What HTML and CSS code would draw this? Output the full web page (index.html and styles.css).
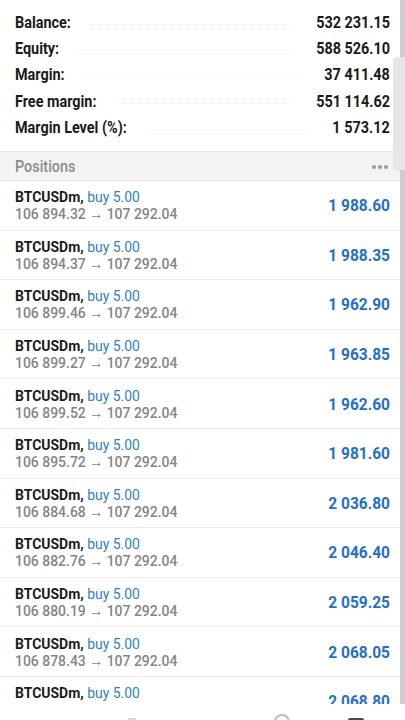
FILE: index.html
```html
<!doctype html>
<html lang="en">
    <head>
        <meta charset="UTF-8" />
        <meta name="viewport" content="width=device-width, initial-scale=1.0" />
        <title>Trade</title>
        <link rel="stylesheet" href="styles.css">
    </head>
    <body>
        <div class="screen">
            <div class="summary">
                <div class="summary-row"><span class="label">Balance:</span><span class="leader"></span><span class="value">532 231.15</span></div>
                <div class="summary-row"><span class="label">Equity:</span><span class="leader"></span><span class="value">588 526.10</span></div>
                <div class="summary-row"><span class="label">Margin:</span><span class="leader"></span><span class="value">37 411.48</span></div>
                <div class="summary-row"><span class="label">Free margin:</span><span class="leader"></span><span class="value">551 114.62</span></div>
                <div class="summary-row"><span class="label">Margin Level (%):</span><span class="leader"></span><span class="value">1 573.12</span></div>
            </div>

            <div class="section-head">
                <span class="label">Positions</span>
                <span class="more"><i></i><i></i><i></i></span>
            </div>

            <div class="positions">
                <div class="position">
                    <div class="info">
                        <div class="title"><b>BTCUSDm,</b> <span class="side">buy 5.00</span></div>
                        <div class="prices">106 894.32 &rarr; 107 292.04</div>
                    </div>
                    <div class="profit">1 988.60</div>
                </div>
                <div class="position">
                    <div class="info">
                        <div class="title"><b>BTCUSDm,</b> <span class="side">buy 5.00</span></div>
                        <div class="prices">106 894.37 &rarr; 107 292.04</div>
                    </div>
                    <div class="profit">1 988.35</div>
                </div>
                <div class="position">
                    <div class="info">
                        <div class="title"><b>BTCUSDm,</b> <span class="side">buy 5.00</span></div>
                        <div class="prices">106 899.46 &rarr; 107 292.04</div>
                    </div>
                    <div class="profit">1 962.90</div>
                </div>
                <div class="position">
                    <div class="info">
                        <div class="title"><b>BTCUSDm,</b> <span class="side">buy 5.00</span></div>
                        <div class="prices">106 899.27 &rarr; 107 292.04</div>
                    </div>
                    <div class="profit">1 963.85</div>
                </div>
                <div class="position">
                    <div class="info">
                        <div class="title"><b>BTCUSDm,</b> <span class="side">buy 5.00</span></div>
                        <div class="prices">106 899.52 &rarr; 107 292.04</div>
                    </div>
                    <div class="profit">1 962.60</div>
                </div>
                <div class="position">
                    <div class="info">
                        <div class="title"><b>BTCUSDm,</b> <span class="side">buy 5.00</span></div>
                        <div class="prices">106 895.72 &rarr; 107 292.04</div>
                    </div>
                    <div class="profit">1 981.60</div>
                </div>
                <div class="position">
                    <div class="info">
                        <div class="title"><b>BTCUSDm,</b> <span class="side">buy 5.00</span></div>
                        <div class="prices">106 884.68 &rarr; 107 292.04</div>
                    </div>
                    <div class="profit">2 036.80</div>
                </div>
                <div class="position">
                    <div class="info">
                        <div class="title"><b>BTCUSDm,</b> <span class="side">buy 5.00</span></div>
                        <div class="prices">106 882.76 &rarr; 107 292.04</div>
                    </div>
                    <div class="profit">2 046.40</div>
                </div>
                <div class="position">
                    <div class="info">
                        <div class="title"><b>BTCUSDm,</b> <span class="side">buy 5.00</span></div>
                        <div class="prices">106 880.19 &rarr; 107 292.04</div>
                    </div>
                    <div class="profit">2 059.25</div>
                </div>
                <div class="position">
                    <div class="info">
                        <div class="title"><b>BTCUSDm,</b> <span class="side">buy 5.00</span></div>
                        <div class="prices">106 878.43 &rarr; 107 292.04</div>
                    </div>
                    <div class="profit">2 068.05</div>
                </div>
                <div class="position">
                    <div class="info">
                        <div class="title"><b>BTCUSDm,</b> <span class="side">buy 5.00</span></div>
                        <div class="prices">106 877.90 &rarr; 107 292.04</div>
                    </div>
                    <div class="profit">2 068.80</div>
                </div>
            </div>

            <!-- scrollbar + faded system bar -->
            <div class="scroll-track"></div>
            <div class="scroll-thumb"></div>
            <div class="nav-fade">
                <span class="nav-back"></span>
                <span class="nav-home"></span>
                <span class="nav-recent"></span>
            </div>
        </div>
    </body>
</html>
```

FILE: styles.css
```css
body {
    margin: 0;
    background-color: white;
    font-family: Roboto, "Liberation Sans", sans-serif;
}

.screen {
    position: relative;
    width: 405px;
    height: 720px;
    overflow: hidden;
    background-color: white;
}

.summary {
    padding: 9px 15px 10px 15px;
}

.summary-row {
    display: flex;
    align-items: center;
    height: 26.4px;
    font-size: 16px;
    font-weight: 700;
    color: #1a1a1a;
}

/* the app font is narrower than Roboto */
.label {
    transform: scaleX(0.9);
    transform-origin: left center;
}

.value {
    transform: scaleX(0.9);
    transform-origin: right center;
}

.leader {
    flex: 1;
    margin: 4px 18px 0 12px;
    border-bottom: 1.5px dotted #ededed;
}

.section-head {
    display: flex;
    justify-content: space-between;
    align-items: center;
    height: 30px;
    padding: 2px 17px 0 15px;
    background-color: #f3f3f3;
    border-top: 1px solid #e8e8e8;
    border-bottom: 1px solid #e8e8e8;
    box-sizing: border-box;
    color: #8c8c8c;
    font-size: 16px;
    font-weight: 500;
}

.more {
    display: flex;
    gap: 2px;
}

.more i {
    width: 4px;
    height: 4px;
    border-radius: 50%;
    background-color: #9a9a9a;
}

.position {
    display: flex;
    justify-content: space-between;
    align-items: center;
    height: 49.6px;
    padding: 0 15px;
    border-bottom: 1px solid #ececec;
    box-sizing: border-box;
}

.info {
    line-height: 17px;
    font-size: 15.5px;
    margin-top: 2px;
    transform: scaleX(0.9);
    transform-origin: left center;
}

.title b {
    color: #1a1a1a;
}

.side {
    color: #2f7fd0;
}

.prices {
    color: #858585;
    font-weight: 500;
}

.profit {
    color: #1f6fcf;
    font-size: 15.5px;
    font-weight: 700;
    transform: scaleY(1.12);
}

.scroll-track {
    position: absolute;
    top: 0;
    right: 0;
    width: 5px;
    height: 100%;
    background-color: #cdcdcd;
}

.scroll-thumb {
    position: absolute;
    top: 57px;
    right: 0;
    width: 12px;
    height: 113px;
    border-radius: 4px 0 0 4px;
    background-color: #e6e6e6;
}

.nav-fade {
    position: absolute;
    z-index: 2;
    left: 0;
    bottom: 0;
    width: 100%;
    height: 16px;
    background-color: white;
}

.nav-back {
    position: absolute;
    left: 128px;
    bottom: 0;
    width: 8px;
    height: 2px;
    background-color: #d8d8d8;
}

.nav-home {
    position: absolute;
    left: 274px;
    bottom: -10px;
    width: 12px;
    height: 12px;
    border: 2px solid #bcbcbc;
    border-radius: 50%;
}

.nav-recent {
    position: absolute;
    left: 348px;
    bottom: -8px;
    width: 16px;
    height: 10px;
    border-radius: 2px;
    background-color: #4a4a4a;
}
```
